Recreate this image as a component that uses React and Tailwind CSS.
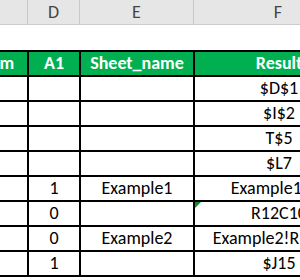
import React from "react";

const rows = [
  { d: "", e: "", f: "$D$1" },
  { d: "", e: "", f: "$I$2" },
  { d: "", e: "", f: "T$5" },
  { d: "", e: "", f: "$L7" },
  { d: "1", e: "Example1", f: "Example1!A1" },
  { d: "0", e: "", f: "R12C10", flag: true },
  { d: "0", e: "Example2", f: "Example2!R12C10" },
  { d: "1", e: "", f: "$J15" },
];

const font = { fontFamily: "Carlito, Lato, 'Liberation Sans', sans-serif" };

export default function App() {
  return (
    <div className="w-[300px] h-[280px] overflow-hidden bg-white" style={font}>
      {/* column letters */}
      <div className="flex h-[25px] bg-[#e6e6e6] border-b border-[#cbcbcb] ml-[-67px] text-[18px] leading-[24px] text-[#444]">
        <div className="w-[95px] shrink-0 border-r border-[#c8c8c8] text-center">C</div>
        <div className="w-[52px] shrink-0 border-r border-[#c8c8c8] text-center">D</div>
        <div className="w-[114px] shrink-0 border-r border-[#c8c8c8] text-center">E</div>
        <div className="w-[168px] shrink-0 text-center">F</div>
      </div>

      <div className="h-[25px]" />

      <div className="ml-[-67px] text-[18px] leading-[23px]">
        {/* table heading */}
        <div className="flex h-[27px] bg-[#00b050] border-y-2 border-black font-bold text-white">
          <div className="w-[96px] shrink-0 border-r-2 border-black text-center">abs_num</div>
          <div className="w-[52px] shrink-0 border-r-2 border-black text-center">A1</div>
          <div className="w-[114px] shrink-0 border-r-2 border-black text-center">Sheet_name</div>
          <div className="w-[168px] shrink-0 text-center">Result</div>
        </div>

        {rows.map((r, i) => (
          <div key={i} className="flex h-[25px] border-b-2 border-black text-black">
            <div className="w-[96px] shrink-0 border-r-2 border-black" />
            <div className="w-[52px] shrink-0 border-r-2 border-black text-center">{r.d}</div>
            <div className="w-[114px] shrink-0 border-r-2 border-black text-center whitespace-nowrap">{r.e}</div>
            <div className="relative w-[168px] shrink-0 text-center whitespace-nowrap">
              {r.flag && (
                <span className="absolute left-0 top-0 w-0 h-0 border-t-[6px] border-r-[6px] border-t-[#138a2e] border-r-transparent" />
              )}
              {r.f}
            </div>
          </div>
        ))}
      </div>
    </div>
  );
}
